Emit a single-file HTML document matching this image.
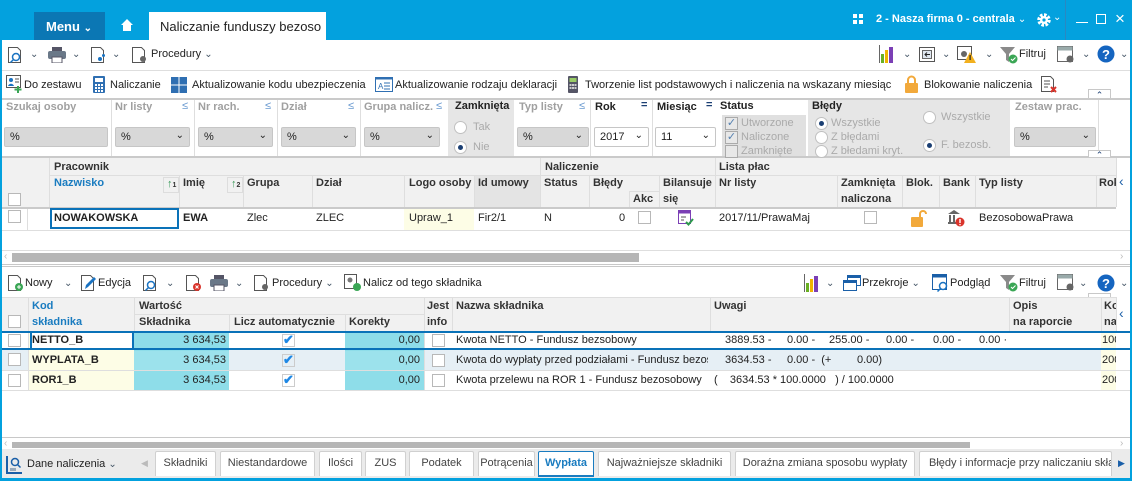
<!DOCTYPE html>
<html><head><meta charset="utf-8"><style>
*{box-sizing:border-box;margin:0;padding:0}
body{width:1132px;height:481px;overflow:hidden;background:#fff;font-family:"Liberation Sans",sans-serif;font-size:11px;color:#222;position:relative}
div,span.a{position:absolute;white-space:nowrap}
.g{color:#a0a0a0;font-weight:bold}
.b{font-weight:bold}
.h{font-weight:bold;color:#333}
.dd{height:20px;background:#d8d8d8;border:1px solid #c6c6c6;border-radius:2px;font-size:11px;padding:3px 5px;top:127px}
.dd i{position:absolute;right:5px;top:2px;font-style:normal;font-size:10px}
.cb{width:13px;height:13px;border:1px solid #b8b8b8;background:#fff}
.v{width:1px;background:#dedede}
.l{height:1px;background:#dedede}
.tab{top:451px;height:25px;background:#fff;border:1px solid #d0d0d0;border-bottom:none;border-radius:2px 2px 0 0;padding-top:5px;text-align:center;color:#444}
.cv{font-size:10px;color:#456}
.rd{width:13px;height:13px;border:1px solid #c0c0c0;border-radius:50%;background:#fff}
.rd.on::after{content:"";position:absolute;left:3px;top:3px;width:5px;height:5px;border-radius:50%;background:#1b3f73}
.cy{background:#8edde9}
.ye{background:#fdfde6}
svg{position:absolute}
</style></head><body>
<!-- title bar -->
<div style="left:0;top:0;width:1132px;height:40px;background:#03a1de"></div>
<div style="left:34px;top:12px;width:71px;height:28px;background:#0b77b4;color:#fff;font-weight:bold;font-size:13px;padding:7px 0 0 12px">Menu <span style="font-size:10px">&#8964;</span></div>
<svg style="left:120px;top:18px" width="14" height="14"><path d="M1 7L7 1L13 7H11V13H3V7Z" fill="#fff"/></svg>
<div style="left:149px;top:12px;width:177px;height:28px;background:#fff;font-size:13px;padding:7px 0 0 11px;overflow:hidden">Naliczanie funduszy bezoso</div>
<svg style="left:853px;top:14px" width="10" height="10"><rect width="4" height="4" fill="#fff"/><rect x="6" width="4" height="4" fill="#fff"/><rect y="6" width="4" height="4" fill="#fff"/><rect x="6" y="6" width="4" height="4" fill="#fff"/></svg>
<div style="left:876px;top:13px;color:#fff;font-weight:bold;font-size:11px">2 - Nasza firma 0 - centrala <span style="font-weight:normal;font-size:10px">&#8964;</span></div>
<svg style="left:1036px;top:12px" width="16" height="16"><circle cx="8" cy="8" r="5" fill="none" stroke="#fff" stroke-width="3.5" stroke-dasharray="2.5 1.4"/><circle cx="8" cy="8" r="4" fill="#fff"/><circle cx="8" cy="8" r="1.6" fill="#03a1de"/></svg>
<div style="left:1053px;top:12px;color:#fff;font-size:10px">&#8964;</div>
<div style="left:1065px;top:0;width:1px;height:40px;background:#2a88c2"></div>
<div style="left:1076px;top:22px;width:12px;height:1px;background:#fff"></div>
<div style="left:1096px;top:14px;width:10px;height:10px;border:1px solid #fff"></div>
<div style="left:1115px;top:9px;color:#fff;font-size:17px">&#215;</div>
<div style="left:0;top:40px;width:2px;height:441px;background:#03a1de"></div>
<div style="left:1130px;top:40px;width:2px;height:441px;background:#03a1de"></div>
<div style="left:0;top:478px;width:1132px;height:3px;background:#03a1de"></div>

<!-- toolbar 1 -->
<svg style="left:7px;top:46px" width="16" height="18"><path d="M1.5 1.5h9l3 3v12h-12z" fill="none" stroke="#555"/><circle cx="9" cy="11" r="3.5" fill="none" stroke="#1a73c2" stroke-width="1.5"/><path d="M6.5 13.5l-3 3" stroke="#1a73c2" stroke-width="1.5"/></svg>
<div class="cv" style="left:30px;top:49px">&#8964;</div>
<svg style="left:48px;top:47px" width="18" height="16"><rect x="4" y="0" width="10" height="4" fill="#556"/><rect x="0" y="4" width="18" height="8" rx="2" fill="#6a7888"/><rect x="4" y="10" width="10" height="6" fill="#fff" stroke="#556"/></svg>
<div class="cv" style="left:72px;top:49px">&#8964;</div>
<svg style="left:90px;top:46px" width="18" height="18"><path d="M1.5 1.5h9l3 3v12h-12z" fill="none" stroke="#555"/><circle cx="10" cy="13" r="2" fill="#1a73c2"/><circle cx="13.5" cy="9.5" r="1.5" fill="#1a73c2"/></svg>
<div class="cv" style="left:112px;top:49px">&#8964;</div>
<svg style="left:131px;top:46px" width="18" height="18"><path d="M1.5 1.5h9l3 3v12h-12z" fill="none" stroke="#555"/><circle cx="12" cy="13" r="3" fill="#666"/></svg>
<div style="left:151px;top:48px">Procedury <span class="cv">&#8964;</span></div>
<svg style="left:879px;top:45px" width="16" height="18"><rect x="0" y="0" width="1" height="18" fill="#666"/><rect x="2" y="9" width="3" height="9" fill="#6ab023"/><rect x="6" y="5" width="3" height="13" fill="#f0b400"/><rect x="10" y="2" width="4" height="16" fill="#7b3fb5"/></svg>
<div class="cv" style="left:903px;top:49px">&#8964;</div>
<svg style="left:919px;top:47px" width="16" height="15"><rect x="0.5" y="0.5" width="15" height="14" fill="#fff" stroke="#555"/><rect x="3.5" y="3.5" width="9" height="8" fill="#dfe7f0" stroke="#666"/><path d="M11 7.5H6M8 5.5L6 7.5l2 2" stroke="#222" fill="none"/></svg>
<div class="cv" style="left:942px;top:49px">&#8964;</div>
<svg style="left:957px;top:46px" width="20" height="18"><rect x="0.5" y="0.5" width="14" height="13" fill="#fff" stroke="#555"/><circle cx="7" cy="8" r="3" fill="#666"/><path d="M13 6L19 17H7z" fill="#f2b01e"/><rect x="12.5" y="9" width="1.2" height="5" fill="#222"/></svg>
<div class="cv" style="left:985px;top:49px">&#8964;</div>
<svg style="left:1000px;top:46px" width="18" height="18"><path d="M0 1h15l-6 7v8l-3-2V8z" fill="#8a8a8a"/><circle cx="13" cy="13" r="4.5" fill="#3aa655"/><path d="M11 13l1.5 1.5 3-3" stroke="#fff" fill="none"/></svg>
<div style="left:1019px;top:48px">Filtruj</div>
<svg style="left:1057px;top:46px" width="20" height="18"><rect x="0.5" y="0.5" width="15" height="15" fill="#fff" stroke="#666"/><rect x="0.5" y="0.5" width="15" height="4" fill="#9aa"/><circle cx="13" cy="13" r="3.5" fill="#666"/></svg>
<div class="cv" style="left:1082px;top:49px">&#8964;</div>
<svg style="left:1097px;top:45px" width="18" height="18"><circle cx="9" cy="9" r="8.5" fill="#1565c0"/><text x="9" y="14" font-size="13" font-weight="bold" fill="#fff" text-anchor="middle" font-family="Liberation Sans">?</text></svg>
<div class="cv" style="left:1120px;top:49px">&#8964;</div>
<div class="l" style="left:2px;top:70px;width:1128px"></div>

<!-- toolbar 2 -->
<svg style="left:6px;top:75px" width="16" height="18"><rect x="0.5" y="0.5" width="14" height="12" fill="#fff" stroke="#555"/><circle cx="5" cy="5" r="2" fill="#1a73c2"/><path d="M2 11c1-3 5-3 6 0" fill="#1a73c2"/><path d="M9 4h4M9 7h4" stroke="#555"/><path d="M12 11v7M8.5 14.5h7" stroke="#3aa655" stroke-width="2"/></svg>
<div style="left:24px;top:79px">Do zestawu</div>
<svg style="left:93px;top:76px" width="12" height="17"><rect width="12" height="17" rx="1" fill="#2f6fb2"/><rect x="2" y="2" width="8" height="4" fill="#fff"/><g fill="#fff"><rect x="2" y="8" width="2" height="2"/><rect x="5" y="8" width="2" height="2"/><rect x="8" y="8" width="2" height="2"/><rect x="2" y="11" width="2" height="2"/><rect x="5" y="11" width="2" height="2"/><rect x="8" y="11" width="2" height="2"/><rect x="2" y="14" width="2" height="2"/><rect x="5" y="14" width="2" height="2"/><rect x="8" y="14" width="2" height="2"/></g></svg>
<div style="left:110px;top:79px">Naliczanie</div>
<svg style="left:171px;top:77px" width="16" height="16"><g fill="#2f6fb2"><rect width="7.5" height="7.5"/><rect x="8.5" width="7.5" height="7.5"/><rect y="8.5" width="7.5" height="7.5"/><rect x="8.5" y="8.5" width="7.5" height="7.5"/></g></svg>
<div style="left:192px;top:79px">Aktualizowanie kodu ubezpieczenia</div>
<svg style="left:375px;top:77px" width="18" height="15"><rect x="0.5" y="0.5" width="17" height="14" fill="#fff" stroke="#2f6fb2"/><rect x="0.5" y="0.5" width="17" height="2" fill="#2f6fb2"/><text x="3" y="12" font-size="8" fill="#2f6fb2" font-family="Liberation Sans">A</text><path d="M9 6h6M9 9h6M9 12h6" stroke="#2f6fb2"/></svg>
<div style="left:395px;top:79px">Aktualizowanie rodzaju deklaracji</div>
<svg style="left:568px;top:76px" width="10" height="17"><rect width="10" height="17" rx="1" fill="#556"/><rect x="1.5" y="2" width="7" height="4" fill="#9c6"/><g fill="#ccc"><rect x="1.5" y="8" width="2" height="2"/><rect x="4" y="8" width="2" height="2"/><rect x="6.5" y="8" width="2" height="2"/><rect x="1.5" y="11" width="2" height="2"/><rect x="4" y="11" width="2" height="2"/><rect x="6.5" y="11" width="2" height="2"/></g></svg>
<div style="left:585px;top:79px">Tworzenie list podstawowych i naliczenia na wskazany miesiąc</div>
<svg style="left:905px;top:75px" width="13" height="18"><path d="M3 8V5a3.5 3.5 0 0 1 7 0v3" fill="none" stroke="#f2a93b" stroke-width="2"/><rect y="8" width="13" height="10" rx="1" fill="#f2a93b"/></svg>
<div style="left:924px;top:79px">Blokowanie naliczenia</div>
<svg style="left:1040px;top:75px" width="18" height="19"><path d="M1.5 1.5h9l3 3v12h-12z" fill="#fff" stroke="#555"/><path d="M4 6h6M4 9h6M4 12h4" stroke="#555"/><path d="M11 12l5 5M16 12l-5 5" stroke="#d9342b" stroke-width="2"/></svg>
<div style="left:1088px;top:89px;width:23px;height:10px;border:1px solid #c8c8c8;border-bottom:none;background:#fff;text-align:center;font-size:9px;color:#1b3f73;line-height:10px">&#8963;</div>

<!-- filter area -->
<div style="left:2px;top:98px;width:1128px;height:2px;background:#cacaca"></div>
<div style="left:2px;top:156px;width:1128px;height:2px;background:#cacaca"></div>
<div style="left:448px;top:100px;width:66px;height:56px;background:#e6e6e6"></div>
<div style="left:808px;top:100px;width:110px;height:56px;background:#e6e6e6"></div>
<div style="left:918px;top:100px;width:92px;height:56px;background:#e6e6e6"></div>
<div style="left:722px;top:115px;width:84px;height:41px;background:#e0e0e0"></div>
<div class="v" style="left:111px;top:100px;height:56px"></div>
<div class="v" style="left:194px;top:100px;height:56px"></div>
<div class="v" style="left:277px;top:100px;height:56px"></div>
<div class="v" style="left:360px;top:100px;height:56px"></div>
<div class="v" style="left:590px;top:100px;height:56px"></div>
<div class="v" style="left:652px;top:100px;height:56px"></div>
<div class="v" style="left:1098px;top:100px;height:56px"></div>
<div class="g" style="left:6px;top:101px">Szukaj osoby</div>
<div class="g" style="left:115px;top:101px">Nr listy</div><div style="left:182px;top:100px;color:#6a9ad0;font-size:11px">&#8804;</div>
<div class="g" style="left:198px;top:101px">Nr rach.</div><div style="left:265px;top:100px;color:#6a9ad0;font-size:11px">&#8804;</div>
<div class="g" style="left:281px;top:101px">Dział</div><div style="left:348px;top:100px;color:#6a9ad0;font-size:11px">&#8804;</div>
<div class="g" style="left:364px;top:101px">Grupa nalicz.</div><div style="left:436px;top:100px;color:#6a9ad0;font-size:11px">&#8804;</div>
<div class="b" style="left:455px;top:100px">Zamknięta</div>
<div class="g" style="left:519px;top:101px">Typ listy</div><div style="left:579px;top:100px;color:#6a9ad0;font-size:11px">&#8804;</div>
<div class="b" style="left:595px;top:101px">Rok</div><div style="left:641px;top:99px;color:#1b3f73;font-weight:bold">=</div>
<div class="b" style="left:657px;top:101px">Miesiąc</div><div style="left:706px;top:99px;color:#1b3f73;font-weight:bold">=</div>
<div class="b" style="left:720px;top:100px">Status</div>
<div class="b" style="left:812px;top:100px">Błędy</div>
<div class="g" style="left:1015px;top:101px">Zestaw prac.</div>
<div class="dd" style="left:4px;width:104px">%</div>
<div class="dd" style="left:115px;width:75px">%<i>&#8964;</i></div>
<div class="dd" style="left:198px;width:75px">%<i>&#8964;</i></div>
<div class="dd" style="left:281px;width:75px">%<i>&#8964;</i></div>
<div class="dd" style="left:364px;width:76px">%<i>&#8964;</i></div>
<div class="dd" style="left:517px;width:72px">%<i>&#8964;</i></div>
<div class="dd" style="left:594px;width:55px;background:#fff">2017<i>&#8964;</i></div>
<div class="dd" style="left:655px;width:61px;background:#fff">11<i>&#8964;</i></div>
<div class="dd" style="left:1014px;width:82px">%<i>&#8964;</i></div>
<div class="rd" style="left:454px;top:121px"></div><div style="left:473px;top:121px;color:#aaa">Tak</div>
<div class="rd on" style="left:454px;top:141px"></div><div style="left:473px;top:141px;color:#aaa">Nie</div>
<div class="cb" style="left:725px;top:117px;background:#e8e8e8;border-color:#aaa;font-size:11px;color:#5580b0;line-height:11px;text-align:center">&#10003;</div><div style="left:741px;top:117px;color:#aaa">Utworzone</div>
<div class="cb" style="left:725px;top:131px;background:#e8e8e8;border-color:#aaa;font-size:11px;color:#5580b0;line-height:11px;text-align:center">&#10003;</div><div style="left:741px;top:131px;color:#aaa">Naliczone</div>
<div class="cb" style="left:725px;top:145px;background:#e8e8e8;border-color:#aaa"></div><div style="left:741px;top:145px;color:#aaa">Zamknięte</div>
<div class="rd on" style="left:815px;top:117px"></div><div style="left:831px;top:117px;color:#aaa">Wszystkie</div>
<div class="rd" style="left:815px;top:131px"></div><div style="left:831px;top:131px;color:#aaa">Z błędami</div>
<div class="rd" style="left:815px;top:145px"></div><div style="left:831px;top:145px;color:#aaa">Z błedami kryt.</div>
<div class="rd" style="left:923px;top:111px"></div><div style="left:941px;top:111px;color:#aaa">Wszystkie</div>
<div class="rd on" style="left:923px;top:139px"></div><div style="left:941px;top:139px;color:#aaa">F. bezosb.</div>
<div style="left:1088px;top:150px;width:23px;height:7px;border:1px solid #c8c8c8;border-bottom:none;background:#fff;text-align:center;font-size:9px;color:#1b3f73;line-height:9px">&#8963;</div>

<!-- grid 1 -->
<div style="left:2px;top:158px;width:1114px;height:49px;background:#f1f1f1"></div>
<div style="left:474px;top:175px;width:66px;height:32px;background:#e4e4e4"></div>
<div class="v" style="left:1116px;top:158px;height:49px"></div>
<div style="left:1119px;top:173px;color:#1b5fa8;font-size:14px">&#8249;</div>
<div class="l" style="left:49px;top:175px;width:1067px"></div>
<div class="v" style="left:49px;top:158px;height:49px"></div>
<div class="v" style="left:179px;top:175px;height:32px"></div>
<div class="v" style="left:243px;top:175px;height:32px"></div>
<div class="v" style="left:312px;top:175px;height:32px"></div>
<div class="v" style="left:404px;top:175px;height:32px"></div>
<div class="v" style="left:474px;top:175px;height:32px"></div>
<div class="v" style="left:540px;top:158px;height:49px"></div>
<div class="v" style="left:589px;top:175px;height:32px"></div>
<div class="v" style="left:629px;top:191px;height:16px"></div>
<div class="l" style="left:629px;top:191px;width:30px"></div>
<div class="v" style="left:659px;top:175px;height:32px"></div>
<div class="v" style="left:715px;top:158px;height:49px"></div>
<div class="v" style="left:837px;top:175px;height:32px"></div>
<div class="v" style="left:902px;top:175px;height:32px"></div>
<div class="v" style="left:939px;top:175px;height:32px"></div>
<div class="v" style="left:975px;top:175px;height:32px"></div>
<div class="v" style="left:1096px;top:175px;height:32px"></div>
<div class="h" style="left:54px;top:161px">Pracownik</div>
<div class="h" style="left:545px;top:161px">Naliczenie</div>
<div class="h" style="left:719px;top:161px">Lista płac</div>
<div class="b" style="left:54px;top:177px;color:#1a7cc0">Nazwisko</div>
<div style="left:163px;top:177px;width:16px;height:16px;border:1px solid #ddd;color:#3a9a5a;font-size:11px;font-weight:bold;padding-left:3px">&#8593;<span style="font-size:7px;color:#333">1</span></div>
<div class="h" style="left:183px;top:177px">Imię</div>
<div style="left:227px;top:177px;width:16px;height:16px;border:1px solid #ddd;color:#3a9a5a;font-size:11px;font-weight:bold;padding-left:3px">&#8593;<span style="font-size:7px;color:#333">2</span></div>
<div class="h" style="left:247px;top:177px">Grupa</div>
<div class="h" style="left:316px;top:177px">Dział</div>
<div class="h" style="left:409px;top:177px">Logo osoby</div>
<div class="h" style="left:478px;top:177px">Id umowy</div>
<div class="h" style="left:544px;top:177px">Status</div>
<div class="h" style="left:593px;top:177px">Błędy</div>
<div class="h" style="left:633px;top:193px">Akc</div>
<div class="h" style="left:663px;top:177px">Bilansuje</div>
<div class="h" style="left:663px;top:193px">się</div>
<div class="h" style="left:719px;top:177px">Nr listy</div>
<div class="h" style="left:841px;top:177px">Zamknięta</div>
<div class="h" style="left:841px;top:193px">naliczona</div>
<div class="h" style="left:906px;top:177px">Blok.</div>
<div class="h" style="left:943px;top:177px">Bank</div>
<div class="h" style="left:979px;top:177px">Typ listy</div>
<div class="h" style="left:1099px;top:177px;width:17px;overflow:hidden">Rok</div>
<div class="cb" style="left:8px;top:193px"></div>
<div style="left:2px;top:207px;width:1114px;height:2px;background:#cacaca"></div>
<div style="left:404px;top:209px;width:70px;height:21px" class="ye"></div>
<div class="l" style="left:2px;top:230px;width:1128px"></div>
<div class="v" style="left:27px;top:209px;height:21px"></div>
<div class="cb" style="left:8px;top:210px"></div>
<div style="left:50px;top:208px;width:129px;height:21px;border:2px solid #0a72b8"></div>
<div class="b" style="left:54px;top:212px">NOWAKOWSKA</div>
<div class="b" style="left:183px;top:212px">EWA</div>
<div style="left:247px;top:212px">Zlec</div>
<div style="left:316px;top:212px">ZLEC</div>
<div style="left:409px;top:212px">Upraw_1</div>
<div style="left:478px;top:212px">Fir2/1</div>
<div style="left:544px;top:212px">N</div>
<div style="left:619px;top:212px">0</div>
<div class="cb" style="left:638px;top:211px"></div>
<svg style="left:678px;top:210px" width="16" height="16"><rect x="0.5" y="0.5" width="12" height="13" fill="#fff" stroke="#7b3fb5"/><rect x="0.5" y="0.5" width="12" height="3" fill="#7b3fb5"/><path d="M3 7h5M3 10h3" stroke="#555"/><path d="M8 12l2.5 2.5L15 9" stroke="#2d9a4c" stroke-width="2" fill="none"/></svg>
<div style="left:719px;top:212px">2017/11/PrawaMaj</div>
<div class="cb" style="left:864px;top:211px"></div>
<svg style="left:911px;top:210px" width="16" height="17"><path d="M9 7V4a3 3 0 0 1 6 0" fill="none" stroke="#f2a93b" stroke-width="2"/><rect x="0" y="7" width="12" height="10" rx="1" fill="#f2a93b"/></svg>
<svg style="left:947px;top:209px" width="18" height="18"><path d="M1 5L7 1l6 4z" fill="#666"/><rect x="2" y="6" width="2" height="7" fill="#666"/><rect x="6" y="6" width="2" height="7" fill="#666"/><rect x="1" y="13" width="11" height="2" fill="#666"/><circle cx="13" cy="13" r="4.5" fill="#d9342b"/><rect x="12.3" y="10" width="1.4" height="4" fill="#fff"/><rect x="12.3" y="15" width="1.4" height="1.2" fill="#fff"/></svg>
<div style="left:979px;top:212px">BezosobowaPrawa</div>
<div class="l" style="left:2px;top:250px;width:1128px"></div>
<div style="left:12px;top:253px;width:627px;height:9px;background:#b6b6b6"></div>
<div style="left:4px;top:251px;color:#bbb;font-size:10px">&#8249;</div>
<div style="left:1120px;top:251px;color:#bbb;font-size:10px">&#8250;</div>
<div style="left:2px;top:264px;width:1128px;height:3px;border-top:1px solid #c8c8c8;border-bottom:1px solid #c8c8c8"></div>

<!-- toolbar 3 -->
<svg style="left:7px;top:274px" width="18" height="18"><path d="M1.5 1.5h9l3 3v12h-12z" fill="#fff" stroke="#555"/><circle cx="12" cy="13" r="4" fill="#3aa655"/><path d="M12 11v4M10 13h4" stroke="#fff"/></svg>
<div style="left:25px;top:277px">Nowy</div>
<div class="cv" style="left:64px;top:278px">&#8964;</div>
<svg style="left:80px;top:274px" width="18" height="18"><path d="M1.5 1.5h9l3 3v12h-12z" fill="#fff" stroke="#555"/><path d="M5 15l1-4 8-8 2 2-8 8z" fill="#1a73c2"/></svg>
<div style="left:98px;top:277px">Edycja</div>
<svg style="left:142px;top:274px" width="16" height="18"><path d="M1.5 1.5h9l3 3v12h-12z" fill="none" stroke="#555"/><circle cx="9" cy="11" r="3.5" fill="none" stroke="#1a73c2" stroke-width="1.5"/><path d="M6.5 13.5l-3 3" stroke="#1a73c2" stroke-width="1.5"/></svg>
<div class="cv" style="left:166px;top:278px">&#8964;</div>
<svg style="left:185px;top:274px" width="18" height="18"><path d="M1.5 1.5h9l3 3v12h-12z" fill="#fff" stroke="#555"/><circle cx="12" cy="13" r="4" fill="#d9342b"/><path d="M10.5 11.5l3 3M13.5 11.5l-3 3" stroke="#fff"/></svg>
<svg style="left:210px;top:275px" width="18" height="16"><rect x="4" y="0" width="10" height="4" fill="#556"/><rect x="0" y="4" width="18" height="8" rx="2" fill="#6a7888"/><rect x="4" y="10" width="10" height="6" fill="#fff" stroke="#556"/></svg>
<div class="cv" style="left:235px;top:278px">&#8964;</div>
<svg style="left:253px;top:274px" width="18" height="18"><path d="M1.5 1.5h9l3 3v12h-12z" fill="none" stroke="#555"/><circle cx="12" cy="13" r="3" fill="#666"/></svg>
<div style="left:272px;top:277px">Procedury <span class="cv">&#8964;</span></div>
<svg style="left:344px;top:274px" width="18" height="18"><rect x="0.5" y="0.5" width="12" height="14" fill="#fff" stroke="#555"/><circle cx="6" cy="6" r="2.5" fill="#777"/><circle cx="13" cy="13" r="4" fill="#3aa655"/></svg>
<div style="left:363px;top:277px">Nalicz od tego składnika</div>
<svg style="left:804px;top:274px" width="16" height="18"><rect x="0" y="0" width="1" height="18" fill="#666"/><rect x="2" y="9" width="3" height="9" fill="#6ab023"/><rect x="6" y="5" width="3" height="13" fill="#f0b400"/><rect x="10" y="2" width="4" height="16" fill="#7b3fb5"/></svg>
<div class="cv" style="left:826px;top:278px">&#8964;</div>
<svg style="left:843px;top:275px" width="18" height="16"><rect x="4.5" y="0.5" width="13" height="10" fill="#fff" stroke="#1a5fa8"/><rect x="4.5" y="0.5" width="13" height="2.5" fill="#1a5fa8"/><rect x="0.5" y="5.5" width="13" height="10" fill="#fff" stroke="#1a5fa8"/><rect x="0.5" y="5.5" width="13" height="2.5" fill="#1a5fa8"/></svg>
<div style="left:862px;top:277px">Przekroje <span class="cv">&#8964;</span></div>
<svg style="left:932px;top:274px" width="18" height="18"><rect x="0.5" y="0.5" width="14" height="15" fill="#fff" stroke="#1a5fa8"/><rect x="0.5" y="0.5" width="14" height="3" fill="#1a5fa8"/><circle cx="11" cy="12" r="3.5" fill="#fff" stroke="#1a73c2" stroke-width="1.5"/><path d="M8.5 14.5l-3 3" stroke="#1a73c2" stroke-width="1.5"/></svg>
<div style="left:950px;top:277px">Podgląd</div>
<svg style="left:1000px;top:274px" width="18" height="18"><path d="M0 1h15l-6 7v8l-3-2V8z" fill="#8a8a8a"/><circle cx="13" cy="13" r="4.5" fill="#3aa655"/><path d="M11 13l1.5 1.5 3-3" stroke="#fff" fill="none"/></svg>
<div style="left:1019px;top:277px">Filtruj</div>
<svg style="left:1057px;top:274px" width="20" height="18"><rect x="0.5" y="0.5" width="15" height="15" fill="#fff" stroke="#666"/><rect x="0.5" y="0.5" width="15" height="4" fill="#9aa"/><circle cx="13" cy="13" r="3.5" fill="#666"/></svg>
<div class="cv" style="left:1079px;top:278px">&#8964;</div>
<svg style="left:1097px;top:274px" width="18" height="18"><circle cx="9" cy="9" r="8.5" fill="#1565c0"/><text x="9" y="14" font-size="13" font-weight="bold" fill="#fff" text-anchor="middle" font-family="Liberation Sans">?</text></svg>
<div class="cv" style="left:1120px;top:278px">&#8964;</div>
<div style="left:1088px;top:293px;width:23px;height:5px;border:1px solid #c8c8c8;border-bottom:none;background:#fff"></div>

<!-- grid 2 -->
<div style="left:2px;top:297px;width:1114px;height:34px;background:#f1f1f1;border-top:1px solid #dedede"></div>
<div class="v" style="left:1116px;top:297px;height:34px"></div>
<div style="left:1119px;top:305px;color:#1b5fa8;font-size:14px">&#8249;</div>
<div class="v" style="left:28px;top:297px;height:34px"></div>
<div class="v" style="left:134px;top:297px;height:34px"></div>
<div class="l" style="left:134px;top:314px;width:290px"></div>
<div class="v" style="left:229px;top:314px;height:17px"></div>
<div class="v" style="left:345px;top:314px;height:17px"></div>
<div class="v" style="left:424px;top:297px;height:34px"></div>
<div class="v" style="left:452px;top:297px;height:34px"></div>
<div class="v" style="left:710px;top:297px;height:34px"></div>
<div class="v" style="left:1009px;top:297px;height:34px"></div>
<div class="v" style="left:1101px;top:297px;height:34px"></div>
<div class="b" style="left:32px;top:300px;color:#1a7cc0">Kod</div>
<div class="b" style="left:32px;top:316px;color:#1a7cc0">składnika</div>
<div class="h" style="left:139px;top:300px">Wartość</div>
<div class="h" style="left:139px;top:316px">Składnika</div>
<div class="h" style="left:234px;top:316px">Licz automatycznie</div>
<div class="h" style="left:349px;top:316px">Korekty</div>
<div class="h" style="left:427px;top:300px">Jest</div>
<div class="h" style="left:427px;top:316px">info</div>
<div class="h" style="left:456px;top:300px">Nazwa składnika</div>
<div class="h" style="left:714px;top:300px">Uwagi</div>
<div class="h" style="left:1013px;top:300px">Opis</div>
<div class="h" style="left:1013px;top:316px">na raporcie</div>
<div class="h" style="left:1104px;top:300px;width:12px;overflow:hidden">Ko</div>
<div class="h" style="left:1104px;top:316px;width:12px;overflow:hidden">na</div>
<div class="cb" style="left:8px;top:315px"></div>
<!-- rows -->
<div style="left:2px;top:350px;width:1114px;height:20px;background:#e6eff5"></div>
<div class="ye" style="left:28px;top:331px;width:106px;height:59px"></div>
<div class="cy" style="left:134px;top:331px;width:95px;height:59px"></div>
<div class="cy" style="left:345px;top:331px;width:79px;height:59px"></div>
<div style="left:134px;top:351px;width:95px;height:19px;background:#9ce2ec"></div>
<div style="left:345px;top:351px;width:79px;height:19px;background:#9ce2ec"></div>
<div class="ye" style="left:1101px;top:331px;width:15px;height:59px"></div>
<div class="l" style="left:2px;top:370px;width:1128px"></div>
<div class="l" style="left:2px;top:390px;width:1128px"></div>
<div class="v" style="left:28px;top:331px;height:59px"></div>
<div class="v" style="left:424px;top:331px;height:59px"></div>
<div style="left:2px;top:331px;width:1128px;height:2px;background:#0a72b8"></div>
<div style="left:2px;top:348px;width:1128px;height:2px;background:#0a72b8"></div>
<div style="left:30px;top:333px;width:104px;height:15px;background:#fff;border:2px solid #0a72b8;border-top:none;border-bottom:none"></div>
<div class="cb" style="left:8px;top:334px"></div>
<div class="cb" style="left:8px;top:353px"></div>
<div class="cb" style="left:8px;top:374px"></div>
<div class="b" style="left:32px;top:334px">NETTO_B</div>
<div class="b" style="left:32px;top:354px">WYPLATA_B</div>
<div class="b" style="left:32px;top:374px">ROR1_B</div>
<div style="left:134px;top:334px;width:92px;text-align:right">3 634,53</div>
<div style="left:134px;top:354px;width:92px;text-align:right">3 634,53</div>
<div style="left:134px;top:374px;width:92px;text-align:right">3 634,53</div>
<div style="left:229px;top:333px;width:116px;height:15px;background:#fff"></div>
<div class="cb" style="left:282px;top:334px;color:#1e88e5;font-weight:bold;font-size:13px;line-height:9px;border-color:#ccc;background:transparent">&#10004;</div>
<div class="cb" style="left:282px;top:354px;color:#1e88e5;font-weight:bold;font-size:13px;line-height:9px;border-color:#ccc;background:transparent">&#10004;</div>
<div class="cb" style="left:282px;top:374px;color:#1e88e5;font-weight:bold;font-size:13px;line-height:9px;border-color:#ccc;background:transparent">&#10004;</div>
<div style="left:345px;top:334px;width:75px;text-align:right">0,00</div>
<div style="left:345px;top:354px;width:75px;text-align:right">0,00</div>
<div style="left:345px;top:374px;width:75px;text-align:right">0,00</div>
<div class="cb" style="left:432px;top:334px"></div>
<div class="cb" style="left:432px;top:354px"></div>
<div class="cb" style="left:432px;top:374px"></div>
<div style="left:456px;top:334px;width:252px;overflow:hidden">Kwota NETTO - Fundusz bezsobowy</div>
<div style="left:456px;top:354px;width:252px;overflow:hidden">Kwota do wypłaty przed podziałami - Fundusz bezosobowy</div>
<div style="left:456px;top:374px;width:252px;overflow:hidden">Kwota przelewu na ROR 1 - Fundusz bezosobowy</div>
<div style="left:725px;top:334px">3889.53 -</div><div style="left:787px;top:334px">0.00 -</div><div style="left:829px;top:334px">255.00 -</div><div style="left:886px;top:334px">0.00 -</div><div style="left:933px;top:334px">0.00 -</div><div style="left:979px;top:334px">0.00 ·</div>
<div style="left:725px;top:354px">3634.53 -</div><div style="left:787px;top:354px">0.00 -&nbsp; (+</div><div style="left:857px;top:354px">0.00)</div>
<div style="left:714px;top:374px">(&nbsp;&nbsp;&nbsp; 3634.53 * 100.0000&nbsp;&nbsp; ) / 100.0000</div>
<div style="left:1101px;top:334px;width:15px;overflow:hidden;padding-left:1px">100</div>
<div style="left:1101px;top:354px;width:15px;overflow:hidden;padding-left:1px">200</div>
<div style="left:1101px;top:374px;width:15px;overflow:hidden;padding-left:1px">200</div>
<!-- bottom scrollbar -->
<div class="l" style="left:2px;top:437px;width:1128px;background:#c8c8c8"></div>
<div style="left:12px;top:442px;width:958px;height:6px;background:#b6b6b6"></div>
<div style="left:4px;top:438px;color:#bbb;font-size:10px">&#8249;</div>
<div style="left:1120px;top:438px;color:#bbb;font-size:10px">&#8250;</div>
<!-- tabs -->
<div style="left:2px;top:449px;width:1128px;height:29px;background:#ebebeb"></div>
<svg style="left:6px;top:456px" width="16" height="18"><rect x="0" y="0" width="2" height="18" fill="#1a5fa8"/><rect x="0" y="16" width="16" height="2" fill="#1a5fa8"/><circle cx="9" cy="6" r="3.5" fill="none" stroke="#1a5fa8" stroke-width="1.5"/><path d="M11.5 8.5l3 3" stroke="#1a5fa8" stroke-width="1.5"/><rect x="4" y="12" width="6" height="3" fill="#9ab"/></svg>
<div style="left:27px;top:458px">Dane naliczenia <span class="cv">&#8964;</span></div>
<div style="left:141px;top:458px;color:#bbb;font-size:9px">&#9664;</div>
<div class="tab" style="left:155px;width:61px">Składniki</div>
<div class="tab" style="left:220px;width:95px">Niestandardowe</div>
<div class="tab" style="left:319px;width:43px">Ilości</div>
<div class="tab" style="left:365px;width:41px">ZUS</div>
<div class="tab" style="left:409px;width:65px">Podatek</div>
<div class="tab" style="left:478px;width:57px">Potrącenia</div>
<div class="tab" style="left:538px;width:56px;color:#1a7cc0;font-weight:bold;border-color:#1a7cc0;border-bottom:2px solid #1a7cc0;height:26px">Wypłata</div>
<div class="tab" style="left:598px;width:133px">Najważniejsze składniki</div>
<div class="tab" style="left:735px;width:180px">Doraźna zmiana sposobu wypłaty</div>
<div class="tab" style="left:919px;width:193px;overflow:hidden;text-align:left;padding-left:9px">Błędy i informacje przy naliczaniu składników</div>
<div style="left:1118px;top:458px;color:#1a5fa8;font-size:9px">&#9654;</div>
</body></html>
